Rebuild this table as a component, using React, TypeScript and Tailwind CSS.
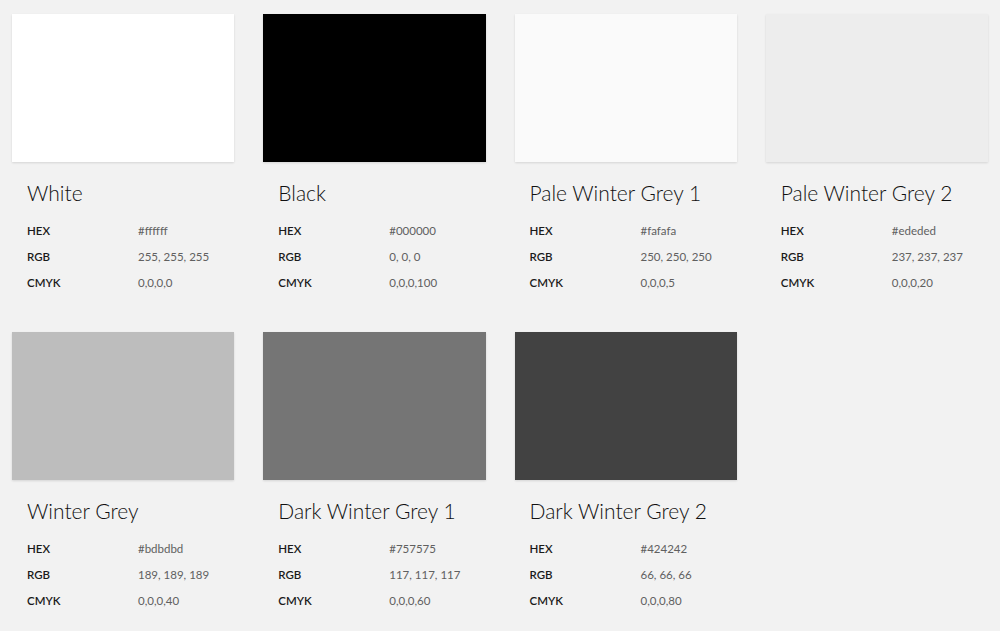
import React from 'react';

const colors = [
  { name: 'White', hex: '#ffffff', rgb: '255, 255, 255', cmyk: '0,0,0,0', swatch: 'bg-[#ffffff]' },
  { name: 'Black', hex: '#000000', rgb: '0, 0, 0', cmyk: '0,0,0,100', swatch: 'bg-[#000000]' },
  { name: 'Pale Winter Grey 1', hex: '#fafafa', rgb: '250, 250, 250', cmyk: '0,0,0,5', swatch: 'bg-[#fafafa]' },
  { name: 'Pale Winter Grey 2', hex: '#ededed', rgb: '237, 237, 237', cmyk: '0,0,0,20', swatch: 'bg-[#ededed]' },
  { name: 'Winter Grey', hex: '#bdbdbd', rgb: '189, 189, 189', cmyk: '0,0,0,40', swatch: 'bg-[#bdbdbd]' },
  { name: 'Dark Winter Grey 1', hex: '#757575', rgb: '117, 117, 117', cmyk: '0,0,0,60', swatch: 'bg-[#757575]' },
  { name: 'Dark Winter Grey 2', hex: '#424242', rgb: '66, 66, 66', cmyk: '0,0,0,80', swatch: 'bg-[#424242]' },
];

const Row = ({ label, value }: { label: string; value: string }) => (
  <div className="flex h-[26px] items-center">
    <span className="w-[111px] text-[11.5px] font-semibold text-[#1a1a1a]">{label}</span>
    <span className="text-[11.5px] font-normal text-[#606060]">{value}</span>
  </div>
);

export default function App() {
  return (
    <div className="min-h-[631px] bg-[#f2f2f2] px-[12px] pt-[14px] font-['Lato',sans-serif]">
      <div className="grid grid-cols-4 gap-x-[29px] gap-y-[36px]">
        {colors.map((c) => (
          <div key={c.name}>
            <div className={`h-[148px] ${c.swatch} shadow-[0_1px_2px_rgba(0,0,0,0.12)]`} />
            <div className="pl-[15px]">
              <h3 className="mt-[17px] h-[28px] text-[21px] font-light leading-[28px] text-[#111]">{c.name}</h3>
              <div className="mt-[11px]">
                <Row label="HEX" value={c.hex} />
                <Row label="RGB" value={c.rgb} />
                <Row label="CMYK" value={c.cmyk} />
              </div>
            </div>
          </div>
        ))}
      </div>
    </div>
  );
}
